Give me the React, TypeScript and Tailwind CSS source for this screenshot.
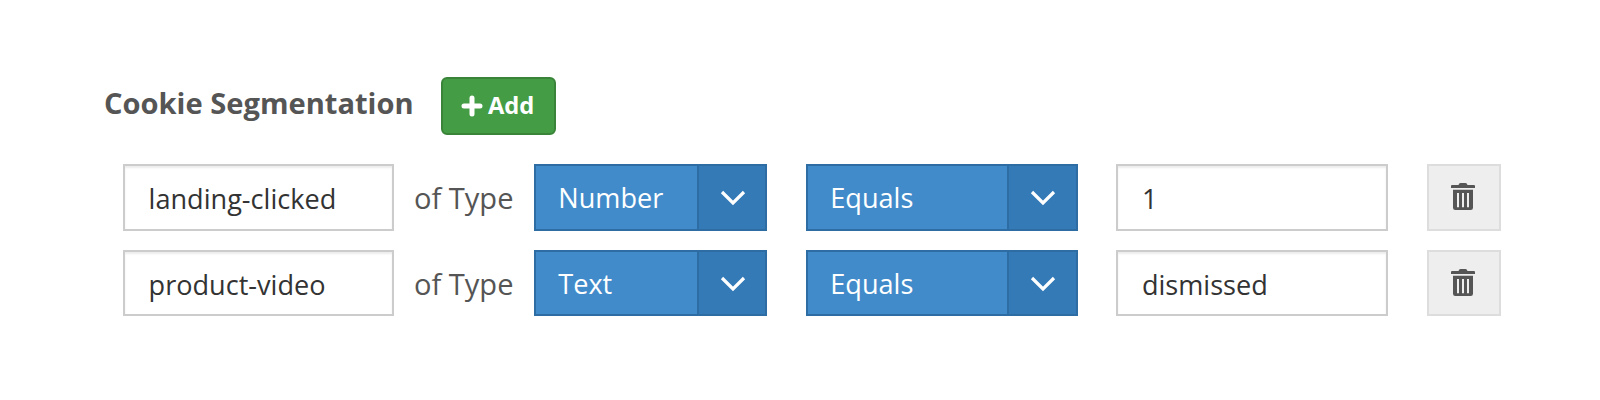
import React, { useState } from 'react';

interface Segment {
  id: number;
  name: string;
  type: string;
  operator: string;
  value: string;
}

const INITIAL_SEGMENTS: Segment[] = [
  { id: 1, name: 'landing-clicked', type: 'Number', operator: 'Equals', value: '1' },
  { id: 2, name: 'product-video', type: 'Text', operator: 'Equals', value: 'dismissed' },
];

const App: React.FC = () => {
  const [segments, setSegments] = useState<Segment[]>(INITIAL_SEGMENTS);

  const addSegment = () =>
    setSegments([...segments, { id: Date.now(), name: '', type: 'Text', operator: 'Equals', value: '' }]);
  const updateSegment = (s: Segment) => setSegments(segments.map(item => item.id === s.id ? s : item));
  const removeSegment = (id: number) => setSegments(segments.filter(s => s.id !== id));

  return (
    <div className="min-h-screen bg-white pl-[104px] pt-[77px] font-['Open_Sans','Noto_Sans',sans-serif] text-[#555]">
      <div className="flex h-[59px] items-start">
        <h2 className="w-[337px] pt-1.5 text-[29.1px] leading-10 font-bold whitespace-nowrap">Cookie Segmentation</h2>
        <button
          onClick={addSegment}
          className="flex h-[58px] w-[115px] items-center rounded-md border-2 border-[#398439] bg-[#449d44] pl-[18px] text-[23.7px] font-bold text-white"
        >
          <PlusIcon />
          <span className="ml-[5px] pb-[3px] leading-8">Add</span>
        </button>
      </div>

      <div className="mt-[28.3px] ml-[19px] space-y-[19.3px]">
        {segments.map(s => (
          <div key={s.id} className="flex h-[66.4px]">
            <TextField value={s.name} onChange={name => updateSegment({ ...s, name })} />
            <span className="w-[139.5px] pt-[14px] pl-[19.5px] text-[29.1px] leading-10 whitespace-nowrap">of Type</span>
            <Dropdown label={s.type} width="w-[233.5px]" />
            <div className="ml-[38.5px]">
              <Dropdown label={s.operator} width="w-[272px]" />
            </div>
            <div className="ml-[38.4px]">
              <TextField value={s.value} onChange={value => updateSegment({ ...s, value })} />
            </div>
            <button
              onClick={() => removeSegment(s.id)}
              className="ml-[39px] flex h-full w-[74px] justify-center border-2 border-[#ddd] bg-[#eee] pt-[17px] pr-[2px]"
            >
              <TrashIcon />
            </button>
          </div>
        ))}
      </div>
    </div>
  );
};

interface TextFieldProps {
  value: string;
  onChange: (value: string) => void;
}

const TextField: React.FC<TextFieldProps> = ({ value, onChange }) => (
  <input
    type="text"
    value={value}
    onChange={e => onChange(e.target.value)}
    className="h-[66.4px] w-[271.4px] border-2 border-[#ccc] bg-white pt-[2px] pl-[23.6px] text-[27.1px] text-[#333] shadow-[inset_0_2px_2px_rgba(0,0,0,0.075)] outline-none"
  />
);

interface DropdownProps {
  label: string;
  width: string;
}

const Dropdown: React.FC<DropdownProps> = ({ label, width }) => (
  <button className={`flex h-[66.4px] border-2 border-[#2e6da4] bg-[#428bca] text-left text-white ${width}`}>
    <span className="flex-1 pt-[12px] pl-[22.4px] text-[27.1px] leading-10">{label}</span>
    <span className="flex h-full w-[68.5px] justify-center border-l-2 border-[#2e6da4] bg-[#337ab7] pt-[24px] pl-px">
      <svg width="26" height="16" viewBox="0 0 26 16" fill="none" stroke="currentColor" strokeWidth="3.2">
        <path d="M2 2l11 11L24 2" />
      </svg>
    </span>
  </button>
);

const PlusIcon: React.FC = () => (
  <svg width="22" height="22" viewBox="0 0 22 22" stroke="currentColor" strokeWidth="5" strokeLinecap="round">
    <path d="M11 3v16M3 11h16" />
  </svg>
);

const TrashIcon: React.FC = () => (
  <svg width="24" height="27" viewBox="0 0 24 27" fill="#555">
    <path d="M7.500 2Q8 0 9.500 0h5Q16 0 16.500 2h6.500q1 0 1 1v2H0V3q0-1 1-1z" />
    <path fillRule="evenodd" d="M2 6.700h20v18q0 2.300-2.300 2.300H4.300Q2 27 2 24.700zM6 10v14.300h2V10zM11 10v14.300h2V10zM16 10v14.300h2V10z" />
  </svg>
);

export default App;
